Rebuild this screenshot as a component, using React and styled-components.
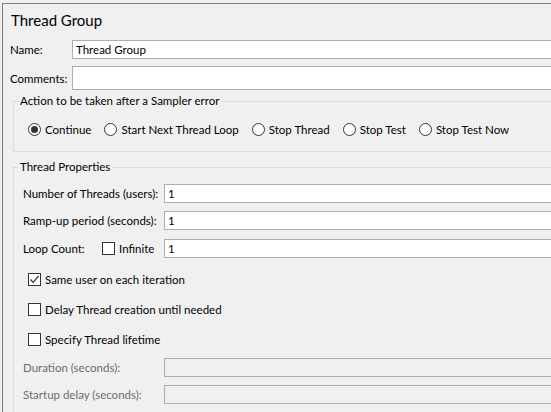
import React from 'react'
import styled, { createGlobalStyle } from 'styled-components'

const Global = createGlobalStyle`
  html, body {
    margin: 0;
    background: #f0f0f0;
    overflow: hidden;
  }
  body {
    font-family: Lato, "Noto Sans", sans-serif;
    font-size: 11.5px;
    color: #000;
  }
`

const Panel = styled.div`
  margin: 3px 0 0 2px;
  width: 640px;
  height: 430px;
  border-top: 1px solid #7c7c7c;
  border-left: 1px solid #7c7c7c;
  padding-left: 7px;
  display: flex;
  flex-direction: column;
`

const Title = styled.div`
  height: 32px;
  display: flex;
  align-items: center;
  font-size: 15px;
  padding-left: 1px;
  margin-bottom: 4px;
`

const Row = styled.div`
  display: flex;
  align-items: center;
  height: ${p => p.$h || 19}px;
  margin-bottom: ${p => p.$mb || 0}px;
`

const Label = styled.span`
  width: ${p => p.$w}px;
  flex-shrink: 0;
  white-space: nowrap;
  color: ${p => (p.$disabled ? '#6d6d6d' : '#000')};
`

const Input = styled.div`
  flex: 1;
  height: 100%;
  box-sizing: border-box;
  border: 1px solid #adadad;
  background: ${p => (p.$disabled ? '#f0f0f0' : '#fff')};
  display: flex;
  align-items: center;
  padding-left: 3px;
  white-space: nowrap;
`

const Group = styled.fieldset`
  margin: ${p => p.$mt || 0}px 0 0 3px;
  min-width: 0;
  border: 1px solid #dcdcdc;
  padding: 0 0 0 4px;
`

const Legend = styled.legend`
  padding: 0 2px;
  line-height: 16px;
`

const Body = styled.div`
  display: flex;
  flex-direction: column;
  padding: ${p => p.$pad};
`

const Radios = styled.div`
  display: flex;
  align-items: center;
  height: 16px;
  gap: 13px;
`

const Choice = styled.label`
  display: flex;
  align-items: center;
  gap: 4px;
  white-space: nowrap;
`

const Circle = styled.span`
  width: 13px;
  height: 13px;
  box-sizing: border-box;
  border: 1px solid #333;
  border-radius: 50%;
  background: #fff;
  display: flex;
  align-items: center;
  justify-content: center;
  &::after {
    content: '';
    width: 7px;
    height: 7px;
    border-radius: 50%;
    background: ${p => (p.$on ? '#333' : 'transparent')};
  }
`

const Box = styled.span`
  width: 13px;
  height: 13px;
  box-sizing: border-box;
  border: 1px solid #333;
  background: #fff;
  display: flex;
  align-items: center;
  justify-content: center;
`

const CheckRow = styled.div`
  display: flex;
  align-items: center;
  height: 22px;
  padding-left: 5px;
  margin-top: ${p => p.$mt || 0}px;
  margin-bottom: 8px;
`

const Radio = ({ on, children }) => (
  <Choice>
    <Circle $on={on} />
    {children}
  </Choice>
)

const Check = ({ on, children }) => (
  <Choice>
    <Box>
      {on && (
        <svg width="11" height="11" viewBox="0 0 11 11">
          <polyline points="1.5,5.5 4.2,8.3 9.5,2" fill="none" stroke="#333" strokeWidth="1.2" />
        </svg>
      )}
    </Box>
    {children}
  </Choice>
)

export default function App() {
  return (
    <>
      <Global />
      <Panel>
        <Title>Thread Group</Title>
        <Row $mb={7}>
          <Label $w={62}>Name:</Label>
          <Input>Thread Group</Input>
        </Row>
        <Row $h={24} $mb={3}>
          <Label $w={62}>Comments:</Label>
          <Input />
        </Row>

        <Group>
          <Legend>Action to be taken after a Sampler error</Legend>
          <Body $pad="12px 0 14px 10px">
            <Radios>
              <Radio on>Continue</Radio>
              <Radio>Start Next Thread Loop</Radio>
              <Radio>Stop Thread</Radio>
              <Radio>Stop Test</Radio>
              <Radio>Stop Test Now</Radio>
            </Radios>
          </Body>
        </Group>

        <Group $mt={7}>
          <Legend>Thread Properties</Legend>
          <Body $pad="9px 0 20px 5px">
            <Row $mb={8}>
              <Label $w={141}>Number of Threads (users):</Label>
              <Input>1</Input>
            </Row>
            <Row $mb={9}>
              <Label $w={141}>Ramp-up period (seconds):</Label>
              <Input>1</Input>
            </Row>
            <Row>
              <Label $w={79}>Loop Count:</Label>
              <Label $w={62}>
                <Check>Infinite</Check>
              </Label>
              <Input>1</Input>
            </Row>
            <CheckRow $mt={10}>
              <Check on>Same user on each iteration</Check>
            </CheckRow>
            <CheckRow>
              <Check>Delay Thread creation until needed</Check>
            </CheckRow>
            <CheckRow>
              <Check>Specify Thread lifetime</Check>
            </CheckRow>
            <Row $mb={8}>
              <Label $w={141} $disabled>Duration (seconds):</Label>
              <Input $disabled />
            </Row>
            <Row>
              <Label $w={141} $disabled>Startup delay (seconds):</Label>
              <Input $disabled />
            </Row>
          </Body>
        </Group>
      </Panel>
    </>
  )
}
